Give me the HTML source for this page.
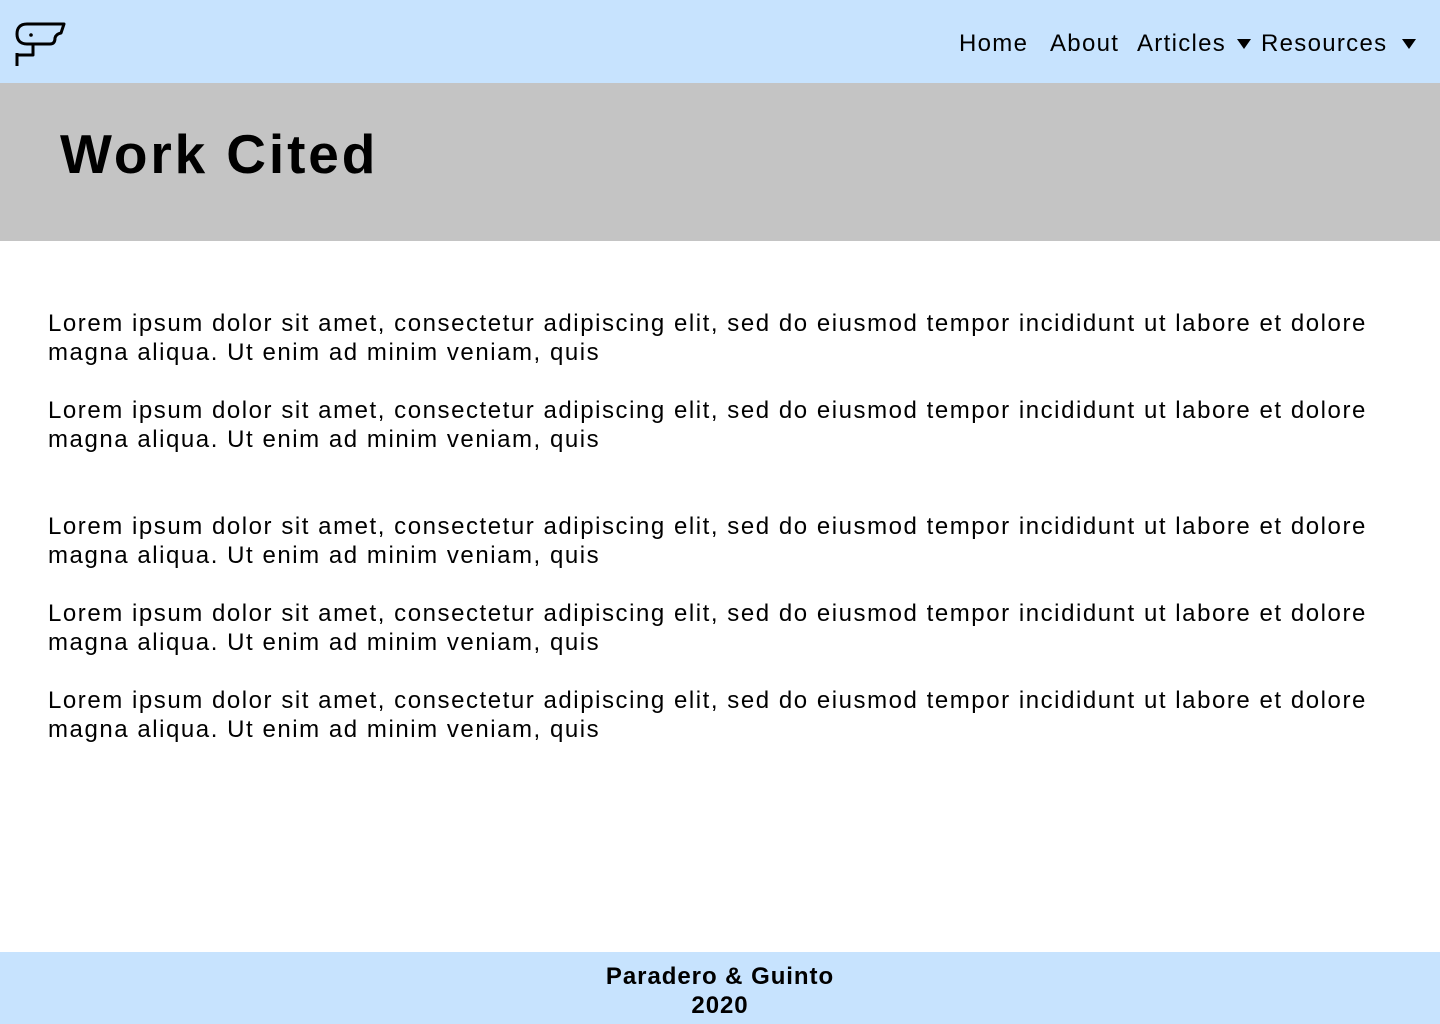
<!DOCTYPE html>
<html><head><meta charset="utf-8"><style>
*{margin:0;padding:0;box-sizing:border-box}
body{width:1440px;height:1024px;position:relative;background:#fff;font-family:"Liberation Sans",sans-serif;color:#000;overflow:hidden}
.nav{position:absolute;left:0;top:0;width:1440px;height:83px;background:#c7e3fe}
.nav span{position:absolute;top:29px;font-size:24px;letter-spacing:1.3px;line-height:30px}
.tri{position:absolute;top:39px;width:0;height:0;border-left:7px solid transparent;border-right:7px solid transparent;border-top:10px solid #000}
.hero{position:absolute;left:0;top:83px;width:1440px;height:158px;background:#c4c4c4}
.hero h1{position:absolute;left:60px;top:38px;font-size:55px;font-weight:bold;line-height:66px;letter-spacing:2.9px}
.p{position:absolute;left:48px;font-size:24px;line-height:29px;letter-spacing:1.55px;white-space:nowrap}
.foot{position:absolute;left:0;top:952px;width:1440px;height:72px;background:#c7e3fe;text-align:center;font-weight:bold;font-size:24px;line-height:29px;padding-top:10px;letter-spacing:0.95px}
</style></head><body>
<div class="nav">
<svg style="position:absolute;left:0;top:0" width="80" height="80" viewBox="0 0 80 80" fill="none" stroke="#000" stroke-width="3" stroke-linejoin="round">
<path d="M27,24 H64 L61,33 Q56,34 55,38 Q55,44 50,44 H27 C20,44 17,40 17,34 C17,28 20,24 27,24 Z"/>
<circle cx="31" cy="35" r="1.8" fill="#000" stroke="none"/>
<path d="M33,45 V55 H18 M17,53 V66"/>
</svg>
<span style="left:959px">Home</span>
<span style="left:1050px">About</span>
<span style="left:1137px">Articles</span>
<div class="tri" style="left:1237px"></div>
<span style="left:1261px">Resources</span>
<div class="tri" style="left:1402px"></div>
</div>
<div class="hero"><h1>Work Cited</h1></div>
<div class="p" style="top:309px">Lorem ipsum dolor sit amet, consectetur adipiscing elit, sed do eiusmod tempor incididunt ut labore et dolore<br>magna aliqua. Ut enim ad minim veniam, quis</div>
<div class="p" style="top:396px">Lorem ipsum dolor sit amet, consectetur adipiscing elit, sed do eiusmod tempor incididunt ut labore et dolore<br>magna aliqua. Ut enim ad minim veniam, quis</div>
<div class="p" style="top:512px">Lorem ipsum dolor sit amet, consectetur adipiscing elit, sed do eiusmod tempor incididunt ut labore et dolore<br>magna aliqua. Ut enim ad minim veniam, quis</div>
<div class="p" style="top:599px">Lorem ipsum dolor sit amet, consectetur adipiscing elit, sed do eiusmod tempor incididunt ut labore et dolore<br>magna aliqua. Ut enim ad minim veniam, quis</div>
<div class="p" style="top:686px">Lorem ipsum dolor sit amet, consectetur adipiscing elit, sed do eiusmod tempor incididunt ut labore et dolore<br>magna aliqua. Ut enim ad minim veniam, quis</div>
<div class="foot">Paradero &amp; Guinto<br>2020</div>
</body></html>
